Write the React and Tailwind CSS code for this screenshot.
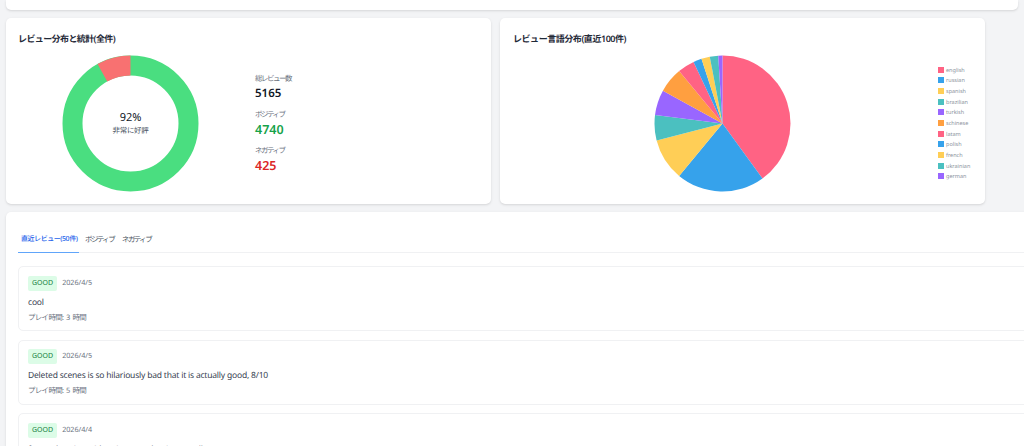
import React from 'react';

const langs = [
  ['english', 'bg-[#ff6384]'],
  ['russian', 'bg-[#36a2eb]'],
  ['spanish', 'bg-[#ffce56]'],
  ['brazilian', 'bg-[#4bc0c0]'],
  ['turkish', 'bg-[#9966ff]'],
  ['schinese', 'bg-[#ff9f40]'],
  ['latam', 'bg-[#ff6384]'],
  ['polish', 'bg-[#36a2eb]'],
  ['french', 'bg-[#ffce56]'],
  ['ukrainian', 'bg-[#4bc0c0]'],
  ['german', 'bg-[#9966ff]'],
];

// counts out of the last 100 reviews, same order as langs
const counts = [40, 21, 10, 6, 6, 6, 4, 2, 2, 2, 1];
const sliceColors = ['#ff6384', '#36a2eb', '#ffce56', '#4bc0c0', '#9966ff', '#ff9f40', '#ff6384', '#36a2eb', '#ffce56', '#4bc0c0', '#9966ff'];

function pt(cx, cy, r, a) {
  const t = (a * Math.PI) / 180;
  return [cx + r * Math.sin(t), cy - r * Math.cos(t)];
}

function PieChart() {
  let sum = 0;
  return (
    <svg width="137" height="137" viewBox="0 0 137 137">
      {counts.map((n, i) => {
        const a = sum * 3.6;
        sum += n;
        const b = sum * 3.6;
        const [x1, y1] = pt(68.5, 68.5, 68, a);
        const [x2, y2] = pt(68.5, 68.5, 68, b);
        return (
          <path
            key={i}
            d={`M68.5 68.5L${x1} ${y1}A68 68 0 ${b - a > 180 ? 1 : 0} 1 ${x2} ${y2}Z`}
            fill={sliceColors[i]}
          />
        );
      })}
    </svg>
  );
}

function Donut() {
  const [x1, y1] = pt(68.5, 68.5, 68, 331);
  const [x2, y2] = pt(68.5, 68.5, 48, 331);
  return (
    <div className="relative w-[137px] h-[137px]">
      <svg width="137" height="137" viewBox="0 0 137 137">
        <circle cx="68.5" cy="68.5" r="58" fill="none" stroke="#4ade80" strokeWidth="20" />
        <path d={`M68.5 0.5A68 68 0 0 0 ${x1} ${y1}L${x2} ${y2}A48 48 0 0 1 68.5 20.5Z`} fill="#f87171" />
      </svg>
      <div className="absolute inset-0 flex flex-col items-center justify-center">
        <div className="text-[11px] leading-[14px] text-[#111827]">92%</div>
        <div className="text-[7.5px] leading-[11px] mt-[1px] tracking-[-0.3px] text-[#4b5563]">非常に好評</div>
      </div>
    </div>
  );
}

function Stat({ label, value, color, size }) {
  return (
    <div className="h-[31px]">
      <div className="text-[7.5px] leading-[12px] pt-[1px] h-[13px] tracking-[-1.5px] text-[#6b7280]">{label}</div>
      <div className={`${size} leading-[18px] font-semibold ${color}`}>{value}</div>
    </div>
  );
}

function Review({ date, text, hours }) {
  return (
    <div className="h-[65px] border border-[#f0f1f3] rounded-[5px] px-[9px] pt-[8.5px] mb-[8.5px] bg-white w-[1040px]">
      <div className="flex items-center gap-[5px]">
        <span className="bg-[#dcfce7] text-[#15803d] text-[7px] leading-[15px] px-[4px] rounded-[2px]">GOOD</span>
        <span className="text-[7.2px] text-[#6b7280]">{date}</span>
      </div>
      <div className="text-[8.5px] leading-[13px] mt-[5px] tracking-[-0.2px] text-[#374151]">{text}</div>
      <div className="text-[7.5px] leading-[13px] mt-[3px] tracking-[-0.7px] [word-spacing:1.5px] text-[#6b7280]">プレイ時間: {hours} 時間</div>
    </div>
  );
}

export default function App() {
  return (
    <div className="font-['Noto_Sans','Noto_Sans_CJK_JP',sans-serif] [text-rendering:geometricPrecision] w-[1024px] h-[446px] overflow-hidden bg-[#f3f4f6]">
      <div className="h-[10px] ml-[6px] w-[1012px] bg-white rounded-b-[5px] shadow-sm" />
      <div className="flex gap-[9px] mt-[8px] ml-[6px]">
        <section className="w-[485px] h-[186px] bg-white rounded-[5px] shadow-sm pt-[15px] px-[12px]">
          <h2 className="text-[9px] leading-[12px] font-semibold tracking-[-0.6px] text-[#1f2937]">レビュー分布と統計(全件)</h2>
          <div className="flex mt-[10px] ml-[44px] items-center">
            <Donut />
            <div className="ml-[56px] flex flex-col gap-[5px]">
              <Stat label="総レビュー数" value="5165" color="text-[#111827]" size="text-[11.5px]" />
              <Stat label="ポジティブ" value="4740" color="text-[#16a34a]" size="text-[12.5px]" />
              <Stat label="ネガティブ" value="425" color="text-[#dc2626]" size="text-[12.5px]" />
            </div>
          </div>
        </section>
        <section className="w-[485px] h-[186px] bg-white rounded-[5px] shadow-sm pt-[15px] px-[13px]">
          <h2 className="text-[9px] leading-[12px] font-semibold tracking-[-0.45px] text-[#1f2937]">レビュー言語分布(直近100件)</h2>
          <div className="flex mt-[10px] ml-[141px]">
            <PieChart />
            <ul className="ml-[147px] mt-[9.5px] flex flex-col">
              {langs.map(([name, color]) => (
                <li key={name} className="flex items-center h-[10.67px] gap-[2px] text-[5.5px] text-[#8b929c]">
                  <span className={`w-[6px] h-[6px] shrink-0 ${color}`} />
                  {name}
                </li>
              ))}
            </ul>
          </div>
        </section>
      </div>
      <section className="mt-[8px] ml-[6px] w-[1040px] h-[300px] bg-white rounded-[5px] shadow-sm px-[12px] pt-[14px]">
        <div className="flex border-b border-[#f0f1f3] h-[27px] text-[7.5px] whitespace-nowrap">
          <div className="pl-[3px] w-[61px] text-[7px] font-medium tracking-[-0.45px] text-[#2563eb] border-b border-[#60a5fa] h-[27px] leading-[28px]">直近レビュー(50件)</div>
          <div className="ml-[6px] w-[29px] tracking-[-1.6px] text-[#4b5563] leading-[28px]">ポジティブ</div>
          <div className="ml-[8px] tracking-[-1.6px] text-[#4b5563] leading-[28px]">ネガティブ</div>
        </div>
        <div className="mt-[13px]">
          <Review date="2026/4/5" text="cool" hours="3" />
          <Review date="2026/4/5" text="Deleted scenes is so hilariously bad that it is actually good, 8/10" hours="5" />
          <Review date="2026/4/4" text="funny shooting with unique mechanics overall" hours="2" />
        </div>
      </section>
    </div>
  );
}
